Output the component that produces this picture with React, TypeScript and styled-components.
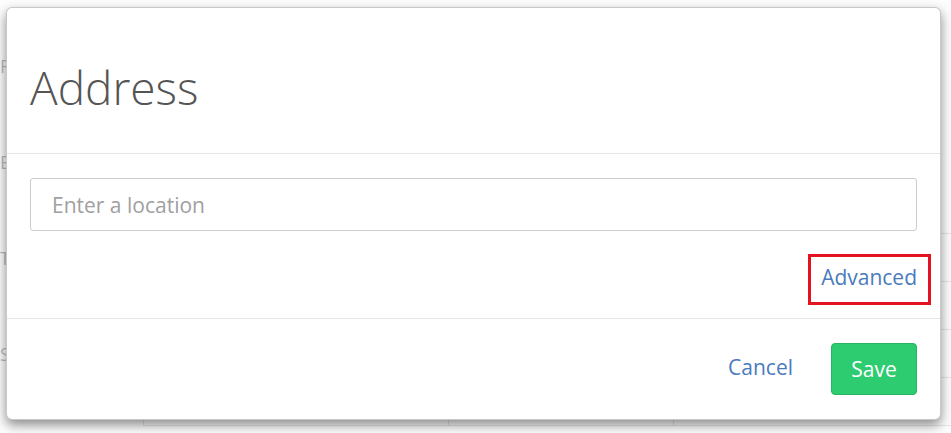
import React from "react";
import styled, { createGlobalStyle } from "styled-components";

const GlobalStyle = createGlobalStyle`
  html, body { margin: 0; padding: 0; background: #ffffff; }
  body { font-family: "Open Sans", "Liberation Sans", sans-serif; }
  * { box-sizing: border-box; }
`;

const Page = styled.div`
  position: relative;
  width: 951px;
  height: 433px;
  overflow: hidden;
  background: #fdfdfd;
`;

const BgTable = styled.div`
  display: grid;
  grid-template-columns: 143px 305px 225px 1fr;
  grid-auto-rows: 48px;
  padding-top: 42px;
`;

const BgCell = styled.div<{ $first?: boolean; $lined?: boolean }>`
  border-left: ${(p) => (p.$first ? "none" : "1px solid #e4e4e4")};
  border-bottom: ${(p) => (p.$lined && !p.$first ? "1px solid #e6e6e6" : "1px solid transparent")};
  color: #b7bec6;
  font-size: 18px;
  line-height: 48px;
  white-space: nowrap;
  overflow: hidden;
`;

const Modal = styled.div`
  position: absolute;
  left: 6px;
  top: 7px;
  width: 935px;
  height: 413px;
  background: #ffffff;
  border: 1px solid rgba(0, 0, 0, 0.22);
  border-radius: 6px;
  box-shadow: 0 5px 12px rgba(0, 0, 0, 0.45);
  display: flex;
  flex-direction: column;
`;

const Header = styled.div`
  height: 146px;
  border-bottom: 1px solid #e5e5e5;
  padding: 56px 23px 0;
`;

const Title = styled.h4`
  margin: 0;
  font-size: 46px;
  line-height: 46px;
  font-weight: 300;
  color: #555555;
`;

const Body = styled.div`
  padding: 24px 23px 0;
  flex: 0 0 auto;
`;

const Input = styled.input`
  display: block;
  width: 100%;
  height: 53px;
  border: 1px solid #cccccc;
  border-radius: 3px;
  padding: 0 21px;
  font-family: "Open Sans", "Liberation Sans", sans-serif;
  font-size: 21px;
  color: #555;
  background: #fff;
  outline: none;
  &::placeholder { color: #a0a0a0; }
`;

const AdvancedRow = styled.div`
  height: 87px;
  display: flex;
  justify-content: flex-end;
  align-items: center;
  padding-top: 5px;
`;

const LinkText = styled.a<{ $marked?: boolean }>`
  position: relative;
  display: inline-block;
  font-size: 21px;
  line-height: 24px;
  color: #4a7bbd;
  text-decoration: none;
  cursor: pointer;
  &::after {
    content: "";
    display: ${(p) => (p.$marked ? "block" : "none")};
    position: absolute;
    left: -13px;
    right: -14px;
    top: -11px;
    bottom: -16px;
    border: 3px solid #e3141f;
  }
`;

const Footer = styled.div`
  border-top: 1px solid #e5e5e5;
  padding: 24px 23px;
  display: flex;
  justify-content: flex-end;
  align-items: center;
  gap: 38px;
`;

const CancelLink = styled(LinkText)`
  margin-top: -5px;
`;

const SaveButton = styled.button`
  width: 86px;
  height: 52px;
  border: 1px solid #27b463;
  border-radius: 4px;
  background: #2ecc71;
  color: #ffffff;
  font-family: "Open Sans", "Liberation Sans", sans-serif;
  font-size: 21px;
  padding: 0;
  cursor: pointer;
`;

const bgLabels = ["Ref", "", "Bed", "", "Type", "", "Size", ""];

export default function App() {
  return (
    <>
      <GlobalStyle />
      <Page>
        <BgTable>
          {bgLabels.map((label, i) =>
            [label, "", "", ""].map((c, j) => (
              <BgCell key={`${i}-${j}`} $first={j === 0} $lined={i >= 3}>
                {c}
              </BgCell>
            ))
          )}
        </BgTable>
        <Modal>
          <Header>
            <Title>Address</Title>
          </Header>
          <Body>
            <Input placeholder="Enter a location" />
            <AdvancedRow>
              <LinkText $marked>Advanced</LinkText>
            </AdvancedRow>
          </Body>
          <Footer>
            <CancelLink>Cancel</CancelLink>
            <SaveButton>Save</SaveButton>
          </Footer>
        </Modal>
      </Page>
    </>
  );
}
